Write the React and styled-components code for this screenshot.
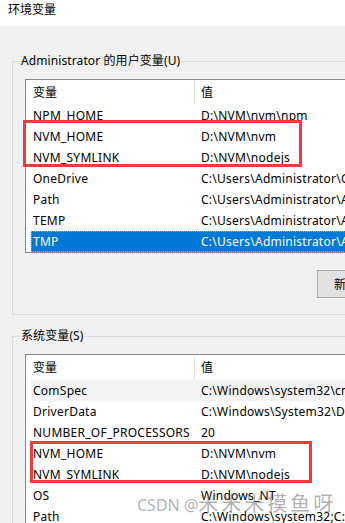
import styled, { createGlobalStyle } from "styled-components"

const GlobalStyle = createGlobalStyle`
    html, body {
        margin: 0;
        padding: 0;
        background: #f0f0f0;
        overflow: hidden;
    }
    body {
        font-family: "Noto Sans", "Noto Sans CJK SC", sans-serif;
        font-size: 12px;
        color: #000;
    }
`

const Window = styled.div`
    position: relative;
    width: 640px;
    height: 523px;
    overflow: hidden;
    background: #f0f0f0;
`

const TitleBar = styled.div`
    box-sizing: border-box;
    height: 26px;
    padding: 2px 0 0 8px;
    line-height: 16px;
    background: #fff;
`

const Body = styled.div`
    display: flex;
    flex-direction: column;
    gap: 13px;
    padding: 27px 0 0 12px;
`

const Group = styled.fieldset`
    box-sizing: border-box;
    width: 604px;
    min-width: 0;
    margin: 0;
    padding: 10px 12px 16px 7px;
    border: 1px solid #dcdcdc;
`

const Legend = styled.legend`
    padding: 0 1px;
    line-height: 16px;
    letter-spacing: 0.1px;
`

const List = styled.div`
    display: flex;
    flex-direction: column;
    margin-left: 5px;
    padding-left: 5px;
    border: 1px solid #828790;
    background: #fff;
    overflow: hidden;
`

const HeaderRow = styled.div`
    display: grid;
    grid-template-columns: 164px 1fr;
    height: 25px;
    line-height: 25px;
`

const HeaderCell = styled.div`
    padding-left: ${p => (p.$first ? "2px" : "6px")};
    border-right: ${p => (p.$first ? "1px solid #e5e5e5" : "none")};
    box-sizing: border-box;
`

const Row = styled.div`
    display: grid;
    grid-template-columns: 164px 1fr;
    height: 21px;
    line-height: 21px;
    white-space: nowrap;
    letter-spacing: 0.25px;
    background: ${p => (p.$selected ? "#0078d7" : p.$hover ? "#f3f3f3" : "transparent")};
    color: ${p => (p.$selected ? "#fff" : "#000")};
    outline: ${p => (p.$selected ? "1px dotted #e59a4c" : "none")};
    outline-offset: -1px;
`

const NameCell = styled.div`
    padding-left: 2px;
    overflow: hidden;
`

const ValueCell = styled.div`
    padding-left: 6px;
    overflow: hidden;
`

const ButtonRow = styled.div`
    display: flex;
    justify-content: flex-end;
    gap: 8px;
    margin-top: 17px;
`

const Button = styled.button`
    box-sizing: border-box;
    width: 90px;
    height: 28px;
    padding: 0 0 0 16px;
    font: inherit;
    color: #000;
    text-align: left;
    white-space: nowrap;
    background: #e1e1e1;
    border: 1px solid #adadad;
`

const Mark = styled.div`
    position: absolute;
    left: ${p => p.$x}px;
    top: ${p => p.$y}px;
    width: ${p => p.$w}px;
    height: ${p => p.$h}px;
    box-sizing: border-box;
    border: 3px solid #ef3b3b;
    pointer-events: none;
`

const Watermark = styled.div`
    position: absolute;
    left: 137px;
    top: 492px;
    line-height: 24px;
    font-size: 16px;
    color: rgba(110, 110, 110, 0.55);
    white-space: nowrap;
    pointer-events: none;
`

const WatermarkCjk = styled.span`
    font-size: 20px;
    letter-spacing: 3px;
`

const userVars = [
    ["NPM_HOME", "D:\\NVM\\nvm\\npm"],
    ["NVM_HOME", "D:\\NVM\\nvm"],
    ["NVM_SYMLINK", "D:\\NVM\\nodejs"],
    ["OneDrive", "C:\\Users\\Administrator\\OneDrive"],
    ["Path", "C:\\Users\\Administrator\\AppData\\Local\\Microsoft\\WindowsApps;"],
    ["TEMP", "C:\\Users\\Administrator\\AppData\\Local\\Temp"],
    ["TMP", "C:\\Users\\Administrator\\AppData\\Local\\Temp"],
]

const systemVars = [
    ["ComSpec", "C:\\Windows\\system32\\cmd.exe"],
    ["DriverData", "C:\\Windows\\System32\\Drivers\\DriverData"],
    ["NUMBER_OF_PROCESSORS", "20"],
    ["NVM_HOME", "D:\\NVM\\nvm"],
    ["NVM_SYMLINK", "D:\\NVM\\nodejs"],
    ["OS", "Windows_NT"],
    ["Path", "C:\\Windows\\system32;C:\\Windows;C:\\Windows\\System32\\Wbem;"],
]

const VarList = ({ rows, selected, hover }) => (
    <List>
        <HeaderRow>
            <HeaderCell $first>变量</HeaderCell>
            <HeaderCell>值</HeaderCell>
        </HeaderRow>
        {rows.map(([name, value], i) => (
            <Row key={name + i} $selected={i === selected} $hover={i === hover}>
                <NameCell>{name}</NameCell>
                <ValueCell>{value}</ValueCell>
            </Row>
        ))}
    </List>
)

const App = () => {
    return (
        <>
            <GlobalStyle />
            <Window>
                <TitleBar>环境变量</TitleBar>
                <Body>
                    <Group>
                        <Legend>Administrator 的用户变量(U)</Legend>
                        <VarList rows={userVars} selected={6} />
                        <ButtonRow>
                            <Button>新建(N)...</Button>
                            <Button>编辑(E)...</Button>
                            <Button>删除(D)</Button>
                        </ButtonRow>
                    </Group>
                    <Group>
                        <Legend>系统变量(S)</Legend>
                        <VarList rows={systemVars} hover={0} />
                    </Group>
                </Body>
                <Mark $x={23} $y={120} $w={279} $h={47} />
                <Mark $x={30} $y={441} $w={282} $h={42} />
                <Watermark>
                    CSDN @<WatermarkCjk>米米米摸鱼呀</WatermarkCjk>
                </Watermark>
            </Window>
        </>
    )
}

export default App
